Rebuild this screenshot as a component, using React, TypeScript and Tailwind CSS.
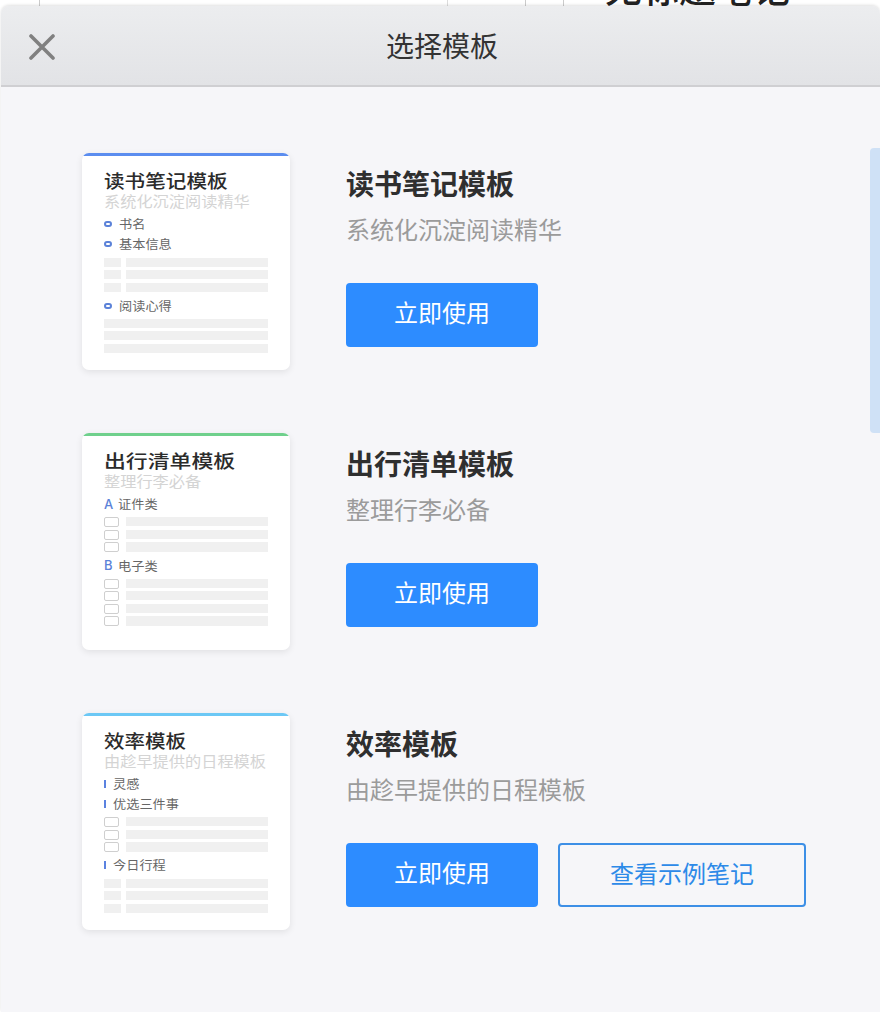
import React from "react";

const CJK = "font-['Inter','Noto_Sans_CJK_SC','Noto_Sans',sans-serif]";

const Bar = ({ stub }: { stub?: boolean }) => (
  <div className="flex gap-[5px] h-[9.2px]">
    {stub && <div className="w-[17px] bg-[#f0f0f0]" />}
    <div className="flex-1 bg-[#f0f0f0]" />
  </div>
);

const Check = () => (
  <div className="flex gap-[7px] h-[9.2px]">
    <div className="w-[15px] h-[10px] rounded-[2px] border border-[#cfcfcf] bg-white" />
    <div className="flex-1 bg-[#f0f0f0]" />
  </div>
);

const Ring = () => <span className="w-[7.5px] h-[6px] rounded-full border-2 border-[#5b82d8]" />;
const Tick = () => <span className="w-[2px] h-[8px] bg-[#5b82e0]" />;

const Label = ({ mark, gap, text }: { mark: React.ReactNode; gap: string; text: string }) => (
  <div className={`flex items-center h-[16px] text-[12px] leading-none text-[#666] ${gap}`}>
    {mark}
    <span className="pt-[2px] origin-left scale-x-[1.1] whitespace-nowrap">{text}</span>
  </div>
);

const Letter = ({ c }: { c: string }) => <span className="w-[9px] text-[13px] font-medium text-[#5b82d8]">{c}</span>;

const Thumb = ({ color, title, titleCls, sub, children }: { color: string; title: string; titleCls: string; sub: string; children: React.ReactNode }) => (
  <div className="w-[208px] h-[217px] shrink-0 bg-white rounded-[7px] overflow-hidden shadow-[0_2px_7px_rgba(0,0,0,0.09)]">
    <div className={`h-[3px] ${color}`} />
    <div className="pl-[22px] pr-[22px] pt-[15px]">
      <div className={`text-[18px] leading-[22px] font-medium text-[#2b2b2b] origin-left whitespace-nowrap ${titleCls}`}>{title}</div>
      <div className="text-[15px] leading-[18px] mb-[5px] text-[#d4d4d4] origin-left scale-x-[1.08] whitespace-nowrap">{sub}</div>
      {children}
    </div>
  </div>
);

const Row = ({ thumb, title, sub, sample }: { thumb: React.ReactNode; title: string; sub: string; sample?: boolean }) => (
  <div className="flex gap-[56px]">
    {thumb}
    <div className="pt-[12px]">
      <div className="text-[28px] leading-[40px] font-bold text-[#2f2f2f]">{title}</div>
      <div className="text-[24px] leading-[34px] mt-[9px] text-[#9b9b9b]">{sub}</div>
      <div className="flex gap-[20px] mt-[35px]">
        <button className="w-[192px] h-[64px] rounded-[4px] bg-[#2d8cff] text-white text-[24px] pb-[2px]">立即使用</button>
        {sample && (
          <button className="w-[248px] h-[64px] rounded-[4px] border-2 border-[#3d8fe6] text-[#2d8ae8] text-[24px]">查看示例笔记</button>
        )}
      </div>
    </div>
  </div>
);

export default function App() {
  return (
    <div className={`relative w-[880px] h-[1012px] overflow-hidden bg-white ${CJK}`}>
      {/* page behind the sheet */}
      <div className="h-[6px] flex bg-white">
        <div className="w-[40px] border-r border-[#ccc]" />
        <div className="w-[408px] border-r border-[#ddd]" />
        <div className="w-[78px] border-r border-[#ccc]" />
        <div className="w-[38px] border-r border-[#ccc]" />
      </div>
      <div className="absolute top-[-20px] left-[605px] text-[37px] leading-[20px] font-medium text-[#222] whitespace-nowrap">无标题笔记</div>

      <div className="relative ml-[1px] h-[1006px] rounded-t-[8px] overflow-hidden bg-[#f6f6f9] shadow-[0_-1px_3px_rgba(0,0,0,0.12)]">
        <div className="relative h-[81px] flex items-center justify-center border-b-2 border-[#cfcfd2] bg-gradient-to-b from-[#ecedef] to-[#e2e3e6]">
          <svg className="absolute left-[28px] top-[28px]" width="26" height="26" viewBox="0 0 26 26" fill="none">
            <path d="M2 2L24 24M24 2L2 24" stroke="#808080" strokeWidth="3.6" strokeLinecap="round" />
          </svg>
          <span className="text-[28px] text-[#333] pl-[3px] pt-[2px]">选择模板</span>
        </div>

        <div className="relative pl-[81px] pt-[66px] flex flex-col gap-[63px]">
          <Row
            title="读书笔记模板"
            sub="系统化沉淀阅读精华"
            thumb={
              <Thumb color="bg-[#5b8def]" titleCls="scale-x-[1.145]" title="读书笔记模板" sub="系统化沉淀阅读精华">
                <Label mark={<Ring />} gap="gap-[7px]" text="书名" />
                <div className="h-[4px]" />
                <Label mark={<Ring />} gap="gap-[7px]" text="基本信息" />
                <div className="flex flex-col gap-[3.4px] mt-[5.7px] mb-[6px]"><Bar stub /><Bar stub /><Bar stub /></div>
                <Label mark={<Ring />} gap="gap-[7px]" text="阅读心得" />
                <div className="flex flex-col gap-[3.4px] mt-[4.7px]"><Bar /><Bar /><Bar /></div>
              </Thumb>
            }
          />
          <Row
            title="出行清单模板"
            sub="整理行李必备"
            thumb={
              <Thumb color="bg-[#6fd08c]" titleCls="scale-x-[1.215]" title="出行清单模板" sub="整理行李必备">
                <Label mark={<Letter c="A" />} gap="gap-[5px]" text="证件类" />
                <div className="flex flex-col gap-[3.4px] mt-[5.3px] mb-[6px]"><Check /><Check /><Check /></div>
                <Label mark={<Letter c="B" />} gap="gap-[5px]" text="电子类" />
                <div className="flex flex-col gap-[3.4px] mt-[5px]"><Check /><Check /><Check /><Check /></div>
              </Thumb>
            }
          />
          <Row
            sample
            title="效率模板"
            sub="由趁早提供的日程模板"
            thumb={
              <Thumb color="bg-[#6cc8f5]" titleCls="scale-x-[1.14]" title="效率模板" sub="由趁早提供的日程模板">
                <Label mark={<Tick />} gap="gap-[7px]" text="灵感" />
                <div className="h-[4px]" />
                <Label mark={<Tick />} gap="gap-[7px]" text="优选三件事" />
                <div className="flex flex-col gap-[3.4px] mt-[5.3px] mb-[5.3px]"><Check /><Check /><Check /></div>
                <Label mark={<Tick />} gap="gap-[7px]" text="今日行程" />
                <div className="flex flex-col gap-[3.4px] mt-[5.7px]"><Bar stub /><Bar stub /><Bar stub /></div>
              </Thumb>
            }
          />
        </div>

        <div className="absolute right-0 top-[142px] w-[10px] h-[285px] rounded-l-[4px] bg-[#cfe1f6]" />
      </div>
    </div>
  );
}
